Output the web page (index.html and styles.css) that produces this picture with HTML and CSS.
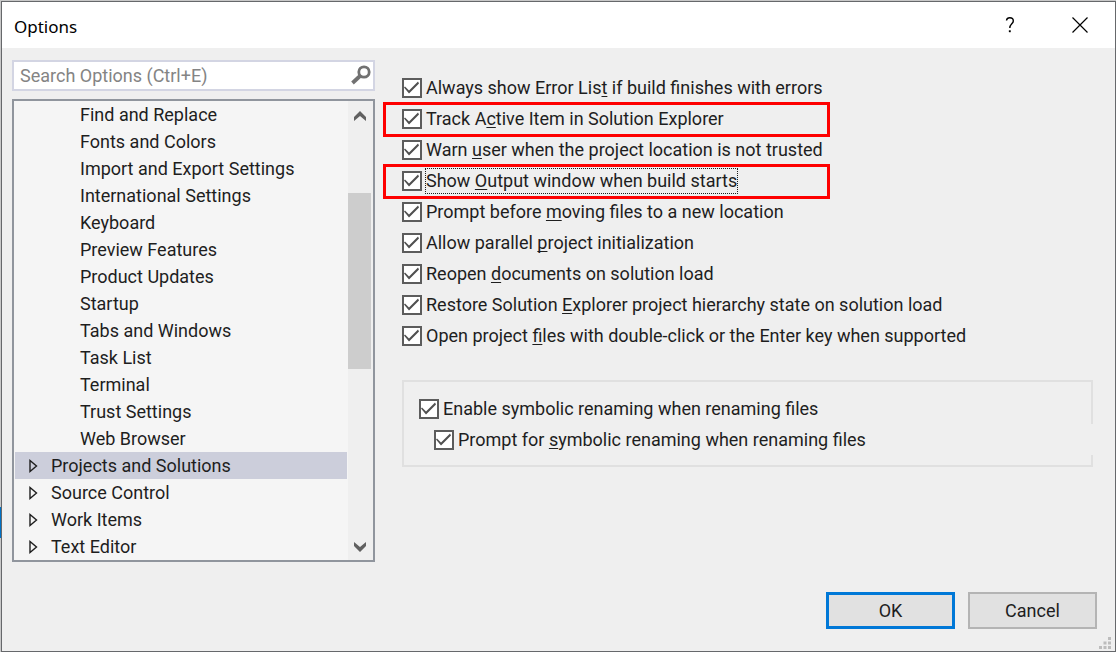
FILE: index.html
```
<!DOCTYPE html>
<html lang="en">
<head>
    <meta charset="UTF-8">
    <meta name="viewport" content="width=device-width, initial-scale=1.0">
    <title>Options</title>
    <link rel="stylesheet" href="styles.css">
</head>
<body>
    <div class="dialog">
        <header class="titlebar">
            <h1>Options</h1>
            <button type="button" class="caption-button" aria-label="Help">
                <svg width="10" height="16" viewBox="0 0 10 16" fill="none" stroke="#000" stroke-width="1.4"><path d="M1.5 3.5C1.8 1.6 3 .8 4.8.8 6.900.8 8.300 2 8.300 3.900 8.300 6.800 4.800 6.900 4.800 11"/><path d="M4.800 13.300v1.900" stroke-width="1.900"/></svg>
            </button>
            <button type="button" class="caption-button" aria-label="Close">
                <svg width="16" height="16" viewBox="0 0 16 16" fill="none" stroke="#000" stroke-width="1.2"><path d="M.5.5l15 15M15.500.5l-15 15"/></svg>
            </button>
        </header>

        <form class="content">
            <div class="sidebar">
                <div class="search">
                    <input type="text" placeholder="Search Options (Ctrl+E)" aria-label="Search Options">
                    <svg class="search-icon" width="20" height="20" viewBox="0 0 20 20" fill="none" stroke="#717171"><circle cx="13" cy="7" r="5.200" stroke-width="2.800"/><path d="M9 11L1.500 18" stroke-width="3.800"/></svg>
                </div>
                <div class="tree-box">
                    <ul class="tree">
                        <li class="child">Find and Replace</li>
                        <li class="child">Fonts and Colors</li>
                        <li class="child">Import and Export Settings</li>
                        <li class="child">International Settings</li>
                        <li class="child">Keyboard</li>
                        <li class="child">Preview Features</li>
                        <li class="child">Product Updates</li>
                        <li class="child">Startup</li>
                        <li class="child">Tabs and Windows</li>
                        <li class="child">Task List</li>
                        <li class="child">Terminal</li>
                        <li class="child">Trust Settings</li>
                        <li class="child">Web Browser</li>
                        <li class="selected"><svg class="arrow" viewBox="0 0 9 14"><path d="M1 1.500v11L7.500 7z"/></svg>Projects and Solutions</li>
                        <li><svg class="arrow" viewBox="0 0 9 14"><path d="M1 1.500v11L7.500 7z"/></svg>Source Control</li>
                        <li><svg class="arrow" viewBox="0 0 9 14"><path d="M1 1.500v11L7.500 7z"/></svg>Work Items</li>
                        <li><svg class="arrow" viewBox="0 0 9 14"><path d="M1 1.500v11L7.500 7z"/></svg>Text Editor</li>
                    </ul>
                    <div class="scrollbar">
                        <svg width="12" height="10" viewBox="0 0 12 10"><path d="M0 6L6 0l6 6v4L6 5 0 10z" fill="#606060"/></svg>
                        <div class="track"><div class="thumb"></div></div>
                        <svg width="12" height="10" viewBox="0 0 12 10"><path d="M0 4l6 6 6-6V0L6 5 0 0z" fill="#606060"/></svg>
                    </div>
                </div>
            </div>

            <div class="settings">
                <div class="option">
                    <input type="checkbox" id="errorList" checked>
                    <label for="errorList">Always show Error Lis<u>t</u> if build finishes with errors</label>
                </div>
                <div class="option marked">
                    <input type="checkbox" id="trackItem" checked>
                    <label for="trackItem">Track A<u>c</u>tive Item in Solution Explorer</label>
                </div>
                <div class="option">
                    <input type="checkbox" id="warnUser" checked>
                    <label for="warnUser">Warn <u>u</u>ser when the project location is not trusted</label>
                </div>
                <div class="option marked">
                    <input type="checkbox" id="showOutput" checked>
                    <label for="showOutput" class="focused">Show <u>O</u>utput window when build starts</label>
                </div>
                <div class="option">
                    <input type="checkbox" id="promptMove" checked>
                    <label for="promptMove">Prompt before <u>m</u>oving files to a new location</label>
                </div>
                <div class="option">
                    <input type="checkbox" id="parallelInit" checked>
                    <label for="parallelInit">Allow parallel <u>p</u>roject initialization</label>
                </div>
                <div class="option">
                    <input type="checkbox" id="reopenDocs" checked>
                    <label for="reopenDocs">Reopen <u>d</u>ocuments on solution load</label>
                </div>
                <div class="option">
                    <input type="checkbox" id="restoreState" checked>
                    <label for="restoreState">Restore Solution <u>E</u>xplorer project hierarchy state on solution load</label>
                </div>
                <div class="option">
                    <input type="checkbox" id="openFiles" checked>
                    <label for="openFiles">Open project <u>f</u>iles with double-click or the Enter key when supported</label>
                </div>

                <div class="group-box">
                    <div class="option">
                        <input type="checkbox" id="enableRename" checked>
                        <label for="enableRename">Enable symbolic renaming when renaming files</label>
                    </div>
                    <div class="option nested">
                        <input type="checkbox" id="promptRename" checked>
                        <label for="promptRename">Prompt for <u>s</u>ymbolic renaming when renaming files</label>
                    </div>
                </div>
            </div>
        </form>

        <footer class="button-group">
            <button type="button" class="button default">OK</button>
            <button type="button" class="button">Cancel</button>
        </footer>
        <svg class="grip" width="12" height="12" viewBox="0 0 12 12" fill="#bdbdbd"><path d="M9 0h3v3H9zM4.500 4.500h3v3h-3zM9 4.500h3v3H9zM0 9h3v3H0zM4.500 9h3v3h-3zM9 9h3v3H9z"/></svg>
    </div>
</body>
</html>
```
FILE: styles.css
```
* {
    box-sizing: border-box;
}
body {
    margin: 0;
    padding: 1px 0 0 1px;
    min-height: 100vh;
    display: flex;
    /* the strip of the window behind the dialog */
    background: linear-gradient(#c8c8c8 507px, #0071c5 507px, #0071c5 538px, #c8c8c8 538px);
    font-family: Roboto, "Noto Sans", sans-serif;
    font-size: 18px;
    line-height: 27px;
    color: #1e1e1e;
}
.dialog {
    position: relative;
    flex: 1;
    display: flex;
    flex-direction: column;
    background: #efefef;
    border: 1px solid #66686b;
}
.titlebar {
    display: flex;
    align-items: center;
    height: 46px;
    padding-left: 12px;
    background: white;
}
h1 {
    flex: 1;
    margin: 0;
    padding-top: 2px;
    font-family: "Noto Sans", sans-serif;
    font-size: 17px;
    font-weight: normal;
    color: #000;
}
.caption-button {
    display: flex;
    justify-content: center;
    align-items: center;
    width: 70px;
    height: 46px;
    padding: 0;
    border: none;
    background: none;
}
.content {
    flex: 1;
    display: flex;
    gap: 27px;
    padding: 12px 22px 0 10px;
}
.sidebar {
    flex: 0 0 363px;
    display: flex;
    flex-direction: column;
    gap: 8px;
}
.search {
    position: relative;
    display: flex;
}
.search input {
    flex: 1;
    height: 31px;
    padding: 0 32px 0 6px;
    border: 2px solid #d3d5e3;
    background: white;
    font: inherit;
}
.search input::placeholder {
    color: #848484;
    opacity: 1;
}
.search-icon {
    position: absolute;
    top: 5px;
    right: 4px;
}
.tree-box {
    display: flex;
    border: 2px solid #90959d;
    background: #f5f5f5;
}
.tree {
    flex: 1;
    margin: 0;
    padding: 0 1px;
    list-style: none;
}
.tree li {
    display: flex;
    align-items: center;
    height: 27px;
    padding-left: 14px;
}
.tree .child {
    padding-left: 65px;
}
.tree .selected {
    background: #cccedb;
}
.arrow {
    width: 9px;
    height: 14px;
    margin-right: 13px;
    fill: none;
    stroke: #1e1e1e;
    stroke-width: 1.4;
}
.scrollbar {
    display: flex;
    flex-direction: column;
    align-items: center;
    width: 25px;
    padding: 10px 2px 8px 0;
    background: #efefef;
}
.track {
    flex: 1;
    align-self: stretch;
    padding-top: 72px;
}
.thumb {
    height: 176px;
    background: #cdcdcd;
}
.settings {
    flex: 1;
    padding-top: 12px;
}
.option {
    position: relative;
    display: flex;
    align-items: center;
    gap: 4px;
    height: 31px;
}
input[type="checkbox"] {
    appearance: none;
    width: 20px;
    height: 20px;
    margin: 0;
    border: 2px solid #5c5c5c;
    background: white;
}
input[type="checkbox"]:checked::before {
    content: "";
    display: block;
    height: 16px;
    background: #505050;
    clip-path: polygon(0 8px, 1px 7px, 5px 11px, 14px 2px, 15px 4px, 5px 14px);
}
u {
    text-underline-offset: 2px;
    text-decoration-thickness: 1px;
    text-decoration-skip-ink: none;
}
.focused {
    outline: 1px dotted #1e1e1e;
    line-height: 24px;
}
/* red highlight round an option */
.marked::after {
    content: "";
    box-sizing: border-box;
    position: absolute;
    top: -1px;
    left: -19px;
    width: 447px;
    height: 35px;
    border: 3px solid #fe0000;
    pointer-events: none;
}
.group-box {
    margin-top: 29px;
    padding: 11px 0 10px 15px;
    border: 2px solid #e0e0e0;
}
.nested {
    margin-right: -2px;
    padding-left: 15px;
    background: #efefef;
}
.button-group {
    display: flex;
    justify-content: flex-end;
    gap: 13px;
    padding: 0 18px 22px;
}
.button {
    width: 129px;
    height: 37px;
    padding: 0;
    border: 2px solid #b4b4b4;
    background: #e1e1e1;
    font: inherit;
    color: #1e1e1e;
}
.default {
    border: 3px solid #0078d7;
}
.grip {
    position: absolute;
    right: 4px;
    bottom: 2px;
}
```
